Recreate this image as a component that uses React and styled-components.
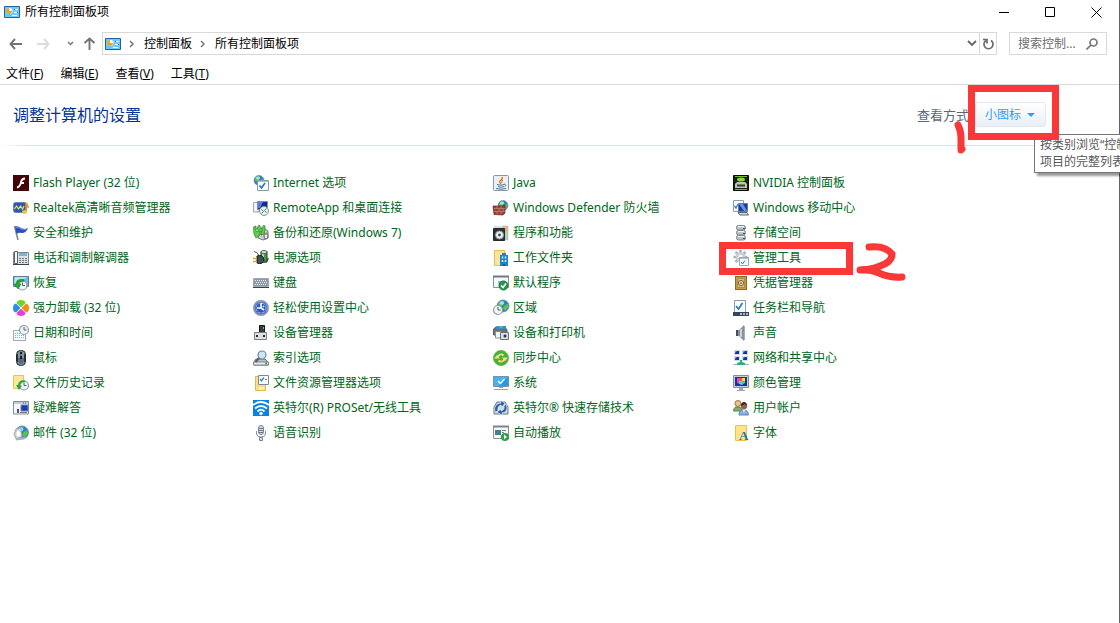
import React, { useState } from "react";
import styled, { createGlobalStyle } from "styled-components";

const GlobalStyle = createGlobalStyle`
    * {
        box-sizing: border-box;
    }

    body {
        margin: 0;
        overflow-x: hidden;
        background: #ffffff;
        color: #000000;
        font: 12px/16px "Noto Sans", "Noto Sans CJK SC", sans-serif;
    }

    button, input, select {
        margin: 0;
        padding: 0;
        border: 0;
        background: none;
        color: inherit;
        font: inherit;
    }

    a {
        color: inherit;
        text-decoration: none;
    }
`;

const Window = styled.div`
    display: flex;
    flex-direction: column;
    min-height: 100vh;
    border-right: 1px solid #626262;
`;

const TitleBar = styled.header`
    display: flex;
    align-items: center;
    height: 24px;
    padding-left: 4px;
`;

const WindowTitle = styled.h1`
    flex: 1;
    margin: 0 0 0 5px;
    font-size: 12px;
    font-weight: normal;
    line-height: 16px;
`;

const WindowButton = styled.button`
    display: flex;
    align-items: center;
    justify-content: center;
    width: 46px;
    height: 24px;
`;

const NavRow = styled.div`
    display: flex;
    align-items: center;
    gap: 12px;
    padding: 8px 12px 0 8px;
`;

const NavButtons = styled.div`
    display: flex;
    align-items: center;
    justify-content: space-between;
    width: 88px;
    margin-right: -6px;
`;

const IconButton = styled.button`
    display: flex;
    align-items: center;
    justify-content: center;
    width: ${(props) => props.$width || 14}px;
    height: 22px;
`;

const AddressBar = styled.nav`
    display: flex;
    flex: 1;
    align-items: center;
    height: 23px;
    padding-left: 2px;
    border: 1px solid #d9d9d9;
`;

const Crumb = styled.a`
    display: flex;
    align-items: center;
`;

const Separator = styled.svg`
    margin: 0 10px 0 8px;
`;

const RefreshBox = styled.div`
    border-left: 1px solid #d9d9d9;
`;

const Spacer = styled.div`
    flex: 1;
`;

const SearchBox = styled.label`
    display: flex;
    align-items: center;
    width: 98px;
    height: 23px;
    padding: 0 8px 0 8px;
    border: 1px solid #d9d9d9;
`;

const SearchInput = styled.input`
    flex: 1;
    min-width: 0;
    outline: none;

    &::placeholder {
        color: #6d6d6d;
        opacity: 1;
    }
`;

const MenuBar = styled.div`
    display: flex;
    gap: 17px;
    padding: 10px 6px 2px;
    border-bottom: 1px solid #d9d9d9;
`;

const MenuItem = styled.button`
    line-height: 17px;
`;

const Heading = styled.section`
    display: flex;
    align-items: center;
    justify-content: space-between;
    height: 61px;
    padding: 0 73px 1px 13px;
    border-bottom: 1px solid;
    border-image: linear-gradient(to right, #ffffff, #d5e3f3 30px) 1;
`;

const HeadingTitle = styled.h2`
    margin: 0;
    color: #003399;
    font-size: 16px;
    font-weight: normal;
    line-height: 24px;
`;

const ViewBy = styled.div`
    position: relative;
    display: flex;
    align-items: center;
    gap: 6px;
`;

const ViewLabel = styled.label`
    color: #5a667c;
    font-size: 13px;
`;

const ViewPicker = styled.span`
    display: flex;
    align-items: center;
    width: 71px;
    height: 25px;
    padding: 0 10px 0 9px;
    border: 1px solid #e2e8f1;
    border-radius: 3px;
    background: linear-gradient(to bottom, #ffffff, #e9eff8);
    color: #3399ff;
`;

const ViewSelect = styled.select`
    flex: 1;
    min-width: 0;
    appearance: none;
    outline: none;
`;

const Tooltip = styled.div`
    position: absolute;
    top: 32px;
    left: 117px;
    height: 39px;
    padding: 1px 5px;
    border: 1px solid #767676;
    background: #ffffff;
    box-shadow: 3px 3px 2px rgba(0, 0, 0, 0.4);
    color: #575757;
    line-height: 17px;
    white-space: nowrap;
`;

const Highlight = styled.span`
    position: absolute;
    top: ${(props) => props.$top}px;
    right: ${(props) => props.$right}px;
    bottom: ${(props) => props.$bottom}px;
    left: ${(props) => props.$left}px;
    border: 7px solid #fb3838;
    pointer-events: none;
`;

const Scribble = styled.svg`
    position: absolute;
    top: ${(props) => props.$top}px;
    left: ${(props) => props.$left}px;
    fill: none;
    stroke: #fb3838;
    stroke-width: 7;
    stroke-linecap: round;
    stroke-linejoin: round;
    pointer-events: none;
`;

const ItemGrid = styled.ul`
    display: grid;
    grid-template-columns: repeat(auto-fill, 240px);
    margin: 0;
    padding: 24px 0 24px 13px;
    list-style: none;
`;

const Item = styled.li`
    position: relative;
    height: 25px;
`;

const ItemLink = styled.a`
    display: inline-flex;
    align-items: center;
    gap: 4px;
    height: 25px;
    color: #00661a;
    white-space: nowrap;

    &:hover {
        text-decoration: underline;
    }
`;

const Icon = ({ children, size = 16 }) => (
    <svg width={size} height={size} viewBox="0 0 16 16" overflow="visible" aria-hidden="true">
        {children}
    </svg>
);

const globe = (x, y, r) => (
    <g transform={`translate(${x} ${y}) scale(${r / 5})`}>
        <circle r="5" fill="#2f7fd6" stroke="#5b88b8" strokeWidth="0.6" />
        <path d="M-4 -2 Q-2 -5 1 -4 L0 -1 L-2 1 L-4 0Z M1 0 L4 -2 L4.500 1 L2 4 L0 2Z" fill="#5cc63c" />
        <ellipse cx="-1" cy="-2.500" rx="2" ry="1.500" fill="#d4f4ff" opacity="0.7" />
    </g>
);

const clock = (x, y, r) => (
    <g>
        <circle cx={x} cy={y} r={r} fill="#edf3f6" stroke="#8e9ba5" strokeWidth="1.200" />
        <path d={`M${x} ${y - r + 1.5} V${y} H${x + r - 2}`} stroke="#51616e" fill="none" />
    </g>
);

const icons = {
    panel: (
        <>
            <path d="M0.500 2.500 H15.500 V13.500 H0.500Z" fill="#70caff" stroke="#1c629c" />
            <circle cx="5.500" cy="7" r="3" fill="#ffffff" />
            <path d="M5 7 V4 A3 3 0 1 0 8 7Z" fill="#f5a21c" />
            <path d="M10 5.500 H14 M10 8.500 H14" stroke="#ffffff" />
            <path d="M10 5.500 H11 M13 8.500 H14" stroke="#1c73bd" />
            <path d="M2 11.500 H7" stroke="#f5a21c" />
            <path d="M8 11.500 H13" stroke="#ffffff" />
        </>
    ),
    flash: (
        <>
            <path d="M0 0 H16 V16 H0Z" fill="#440304" />
            <path d="M12 3.500 Q9 3.500 8 7 Q7 12 4 12.500 M7 8 H11" fill="none" stroke="#ffffff" strokeWidth="1.800" />
        </>
    ),
    realtek: (
        <>
            <rect x="0.500" y="2.500" width="13" height="10" rx="2" fill="#2d56bd" stroke="#6e83b3" />
            <path d="M1.500 9 L3.500 6 L5.500 9 L7.500 6 L9.500 9 L11 6" fill="none" stroke="#f5e44a" strokeWidth="1.200" />
            <path d="M13 12 V3 Q15.500 5 15 8" fill="none" stroke="#e0a121" strokeWidth="1.500" />
            <ellipse cx="11.500" cy="12" rx="2.500" ry="2" fill="#f3c044" />
        </>
    ),
    flag: (
        <>
            <path d="M1.500 1 L5 15" stroke="#7b8793" strokeWidth="1.500" />
            <path d="M2 1.500 Q5 0.500 8 3 Q11 5 15 3 Q13 8 9 8 Q6 7 3.500 9Z" fill="#2b4fc0" />
            <path d="M3 2.500 Q6 2 8 4 L13 4.500" fill="none" stroke="#6f92dd" />
        </>
    ),
    phone: (
        <>
            <path d="M0.500 2.500 H15.500 V14.500 H0.500Z" fill="#dde3e8" stroke="#7c858d" />
            <path d="M0 14.500 H16" stroke="#3c444b" />
            <path d="M1.500 1.500 H4.500 V13.500 H1.500Z" fill="#f7f9fa" stroke="#59636c" />
            <path d="M6 3 H14 V6 H6Z" fill="#7fb2cd" />
            <path d="M6 8.500 H14 M6 10.500 H14 M6 12.500 H14" stroke="#6c7881" strokeDasharray="2 1" />
        </>
    ),
    recovery: (
        <>
            <path d="M0.500 1.500 H15.500 V11.500 H0.500Z" fill="#68bbee" stroke="#62798a" />
            <path d="M2 2 H14 L5 9 H1Z" fill="#b5e2fb" />
            {clock(9.5, 10.5, 4.5)}
            <path d="M11 4.500 Q3 3.500 3 9 H1 L5 14 L8 9 H6 Q6 6.500 11 6Z" fill="#25a536" stroke="#137625" strokeWidth="0.500" />
        </>
    ),
    clover: (
        <>
            <path d="M8 7.500 L3.500 3 Q4 0 8 0 Q12 0 12.500 3Z" fill="#6fd429" />
            <path d="M8.500 8 L13 3.500 Q16 4 16 8 Q16 12 13 12.500Z" fill="#f98b1a" />
            <path d="M8 8.500 L12.500 13 Q12 16 8 16 Q4 16 3.500 13Z" fill="#e23fdc" />
            <path d="M7.500 8 L3 12.500 Q0 12 0 8 Q0 4 3 3.500Z" fill="#238ef5" />
            <path d="M5 5 L11 11 M11 5 L5 11" stroke="#ffffff" />
        </>
    ),
    date: (
        <>
            <path d="M0.500 5.500 H12.500 V15.500 H0.500Z" fill="#f4fafc" stroke="#a0abb4" />
            <path d="M2 8.500 H11 M2 10.500 H11 M2 12.500 H11" stroke="#79bbcf" strokeDasharray="1 1" />
            {clock(11, 5, 4.5)}
        </>
    ),
    mouse: (
        <>
            <rect x="3.500" y="0.500" width="9" height="15" rx="4" fill="#8292a3" stroke="#20262c" />
            <path d="M5 8 Q5 14 8 14 Q11 14 11 8Z" fill="#59687a" />
            <path d="M4.500 4 V12 M11.500 4 V12" stroke="#2b333c" />
            <path d="M8 2 V9" stroke="#15191d" strokeWidth="2" />
            <path d="M8 4 V6" stroke="#b9cbd7" />
        </>
    ),
    history: (
        <>
            <path d="M0.500 0.500 H10.500 V13.500 H0.500Z" fill="#fde79a" stroke="#e8c35a" />
            {clock(11, 10.5, 4.5)}
            <path d="M12 5.500 Q6 4.500 5 10 H3 L6 15 L9 10.500 H7 Q8 7 12 7Z" fill="#28a738" />
        </>
    ),
    trouble: (
        <>
            <path d="M0.500 1.500 H15.500 V14 H0.500Z" fill="#f4f7fa" stroke="#838c98" />
            <path d="M1 3 H15" stroke="#c1cad7" strokeWidth="2" />
            <path d="M10 3 H14" stroke="#416095" strokeDasharray="1 1" />
            <path d="M8 5 H15 V11 H8Z" fill="#163eb8" stroke="#76869f" />
            <path d="M7 12.500 H14" stroke="#667580" />
            <path d="M4 9 H6 V13 H4Z" fill="#4e5966" />
        </>
    ),
    mail: (
        <>
            {globe(9, 7.5, 6.5)}
            <path d="M1 9 L3 4 L8 3 L9 12 L3 14Z" fill="#d3dbe4" stroke="#8995a1" strokeWidth="0.700" />
            <path d="M3 7 L5 4.500 L8 7 V12 H3Z" fill="#ffffff" stroke="#aab3bd" strokeWidth="0.700" />
            <path d="M3 14.500 L12 13" stroke="#a8b3be" strokeWidth="2" />
        </>
    ),
    internet: (
        <>
            {globe(6, 5.5, 5)}
            <path d="M4.500 5.500 H15.500 V15.500 H4.500Z" fill="#f5fafe" stroke="#8b9baf" />
            <path d="M5 6.500 H15" stroke="#b0bfce" />
            <path d="M6.500 10.500 L8.500 13 L12 8" fill="none" stroke="#176fc9" strokeWidth="1.500" />
        </>
    ),
    remote: (
        <>
            <path d="M0.500 2.500 H6 V12 H0.500Z" fill="#f2f4f8" stroke="#9ba5b3" />
            <path d="M4.500 1.500 H14.500 V9.500 H4.500Z" fill="#102a99" stroke="#8291aa" />
            <path d="M5 2 H10 L7 8 H5Z" fill="#5a7bdd" />
            <circle cx="11" cy="11" r="4.500" fill="#e8edf0" stroke="#8c969e" />
            <path d="M8.500 9.500 L10.500 11.500 L8.500 13.500 M13.500 8.500 L11.500 10.500 L13.500 12.500" stroke="#369945" fill="none" />
        </>
    ),
    backup: (
        <>
            <path d="M6 7 L12 4 L15 6 V13 L10 15 L5 13Z" fill="#c9ced1" stroke="#717a81" />
            <ellipse cx="13" cy="11" rx="2" ry="3" fill="#e8edef" stroke="#5c656b" />
            <circle cx="13" cy="9" r="1" fill="#e4743c" />
            <path d="M0.500 2 L3 1 V6 L5 7 V4 L3.500 4 L6 0 L9 4 H7 L7 10 L3 13 L1 9Z M9 3 L10.500 0.500 L12 1 V5 L11 9 L8 10 L8 7 L9 6Z" fill="#5fd04a" stroke="#217c25" strokeWidth="0.700" />
        </>
    ),
    power: (
        <>
            <path d="M8 1.500 H14 V12 H8Z" fill="#35a949" stroke="#26312c" />
            <path d="M10 3 V7" stroke="#b9efc0" strokeWidth="1.500" />
            <ellipse cx="11" cy="2" rx="3" ry="1.500" fill="#e3e9e6" stroke="#56605b" />
            <path d="M1 1.500 Q5 2 6 6" fill="none" stroke="#565e5e" />
            <path d="M4 6 Q10 4 11 10 Q10 15 4 13Z" fill="#444d4f" stroke="#141919" />
            <path d="M0 8.500 H4 M0 11.500 H4" stroke="#d8a529" strokeWidth="1.500" />
            <path d="M10 12 Q15 12 15 8" fill="none" stroke="#454b4c" strokeWidth="1.500" />
        </>
    ),
    keyboard: (
        <>
            <path d="M0.500 3.500 H15.500 V11.500 H0.500Z" fill="#8e99a6" stroke="#a1a9b4" />
            <path d="M2 5.500 H14 M3 7.500 H14 M2 9.500 H14" stroke="#eef1f5" strokeDasharray="1 1" />
            <path d="M0 12.500 H16" stroke="#3a4350" />
        </>
    ),
    ease: (
        <>
            <circle cx="8" cy="8" r="7" fill="#2858c5" stroke="#8b96b0" strokeWidth="2" />
            <circle cx="8" cy="8" r="5" fill="none" stroke="#a2bef7" strokeDasharray="3 1" />
            <path d="M4 8 H8 V4 M8 8 L11 10 M9 3 L8 4 M10 6 L11 7" fill="none" stroke="#ffffff" strokeWidth="1.600" />
        </>
    ),
    device: (
        <>
            <path d="M6.500 0.500 H11.500 V8 H6.500Z" fill="#333b40" stroke="#17191b" />
            <path d="M10.500 2 V4" stroke="#4bdf51" />
            <path d="M1.500 7.500 H13.500 V14.500 H1.500Z" fill="#dce0e2" stroke="#777f84" />
            <path d="M4 10 V12 M11 10 V12" stroke="#22282c" strokeWidth="2" />
        </>
    ),
    index: (
        <>
            <path d="M3 9 H12 L15 12 V15 H1 V12Z" fill="#bac1c6" stroke="#616b72" />
            <path d="M0.500 12 H15.500 V15 H0.500Z" fill="#eceff1" stroke="#79828a" />
            <circle cx="9" cy="5" r="4" fill="#cae6f8" stroke="#7c8790" strokeWidth="1.200" />
            <path d="M6 8 L2.500 12" stroke="#59636b" strokeWidth="2" />
            <path d="M13 12.500 V14.500" stroke="#3da843" strokeWidth="2" />
        </>
    ),
    explorer: (
        <>
            <path d="M2.500 1.500 H12.500 V15.500 H2.500Z" fill="#fddf82" stroke="#e3b945" />
            <path d="M5.500 0.500 H15.500 V9.500 H5.500Z" fill="#ffffff" stroke="#7e8792" />
            <path d="M7 4 L8.500 6 L11 2.500" fill="none" stroke="#2d83dc" strokeWidth="1.300" />
            <path d="M12 4.500 H14" stroke="#6f7a84" />
            <path d="M6 12 H11 V15 H6Z" fill="#fff2be" />
        </>
    ),
    wifi: (
        <>
            <path d="M0 0 H16 V16 H0Z" fill="#0982e7" />
            <path d="M0 5 Q8 -1 16 5 M2 8.500 Q8 3.500 14 8.500 M4.500 11.500 Q8 8 11.500 11.500" fill="none" stroke="#ffffff" strokeWidth="1.800" />
            <circle cx="8" cy="13.500" r="1.700" fill="#ffffff" />
        </>
    ),
    mic: (
        <>
            <rect x="5.500" y="0.500" width="5" height="9" rx="2.500" fill="#d6dce3" stroke="#7c8696" />
            <path d="M6 3.500 H10 M6 5.500 H10 M6 7.500 H10" stroke="#69778b" />
            <path d="M3.500 6 V9 Q4 12 8 12 Q12 12 12.500 9 V6 M8 12 V15" fill="none" stroke="#8992a0" />
            <path d="M6.500 12.500 H9.500 V15.500 H6.500Z" fill="#dbe0e6" stroke="#778395" />
        </>
    ),
    java: (
        <>
            <rect x="0.500" y="0.500" width="15" height="15" rx="1" fill="#eaf0f5" stroke="#8a98a8" />
            <path d="M9 2 Q10 4 7 6 Q6 7 8 9" fill="none" stroke="#e7791d" strokeWidth="1.400" />
            <path d="M10 5 Q8 6 9 8" fill="none" stroke="#e7791d" />
            <path d="M4 9.500 Q8 11 11 9.500 M5 11.500 Q8 13 11 11.500 M3 13.500 Q8 15 13 13.500" fill="none" stroke="#467398" />
            <path d="M11 9 Q14.500 10 11.500 11.500" fill="none" stroke="#467398" />
        </>
    ),
    firewall: (
        <>
            {globe(10, 5.5, 5)}
            <path d="M0 6 L10 6 L12 5 V13 L10 15 L1 14.500Z" fill="#9c4133" stroke="#5e241b" strokeWidth="0.700" />
            <path d="M1 8.500 H12 M1 11.500 H12 M4 6 V8 M8 6 V8 M6 9 V11 M10 9 V11 M4 12 V14 M8 12 V14" stroke="#d9a898" strokeWidth="0.500" />
        </>
    ),
    programs: (
        <>
            <path d="M1 1 H14 V5 H1Z" fill="#d9dee1" />
            <path d="M10 1 H15 V15 H10Z" fill="#b3ccb9" stroke="#abb4ba" strokeWidth="0.500" />
            <path d="M12 1 H15 V5 L12 8Z" fill="#e9ae7d" />
            <path d="M0.500 3.500 H11.500 V15.500 H0.500Z" fill="#2b3237" stroke="#24292d" />
            <circle cx="6.500" cy="10" r="4" fill="#edf0f1" stroke="#929ba1" />
            <circle cx="6.500" cy="10" r="1.400" fill="#3e484f" />
        </>
    ),
    workFolder: (
        <>
            <path d="M1.500 0.500 H11.500 V15.500 H1.500Z" fill="#fde69c" stroke="#e5bd55" />
            <path d="M7 5 H15 V16 H7Z M9 3 H13 V5 H9Z" fill="#1d83cf" />
            <path d="M9.500 6.500 V8.500 M12.500 6.500 V8.500 M9.500 10 V12 M12.500 10 V12" stroke="#d0ecfd" strokeWidth="1.600" />
            <path d="M11 14 V16" stroke="#0d5b99" strokeWidth="2" />
        </>
    ),
    defaults: (
        <>
            <path d="M0.500 1.500 H15.500 V12.500 H0.500Z" fill="#f6f8fb" stroke="#89939e" />
            <path d="M0 1.500 H16" stroke="#6d7884" strokeWidth="2" />
            <path d="M5 6 H10 L6 11Z" fill="#7fb7e6" />
            <circle cx="10.500" cy="10.500" r="4.500" fill="#249b46" stroke="#127634" />
            <path d="M8 10.500 L10 12.500 L13 8.500" fill="none" stroke="#ffffff" strokeWidth="1.600" />
        </>
    ),
    region: <>{globe(10, 6, 6)}{clock(5, 10, 4.5)}</>,
    printer: (
        <>
            <path d="M0.500 4 L3 2 H12 L14 5 V10 H0.500Z" fill="#6a7279" stroke="#555f67" />
            <path d="M4 1 H13 V4 H3Z" fill="#328dd5" />
            <path d="M6 1 H10 L9 3 H7Z" fill="#66c452" />
            <path d="M2.500 6.500 H8 V13 H2.500Z" fill="#f4f6f8" stroke="#87919a" />
            <path d="M7.500 7.500 H15.500 V14.500 H7.500Z" fill="#d8dee2" stroke="#68727a" />
            <circle cx="12" cy="11" r="2" fill="#29333a" stroke="#ffffff" strokeWidth="0.700" />
        </>
    ),
    sync: (
        <>
            <circle cx="8" cy="8" r="7.500" fill="#4aae3c" stroke="#5fbb43" />
            <path d="M4.500 8 A3.500 3.500 0 0 1 10.500 5.500 M11.500 8 A3.500 3.500 0 0 1 5.500 10.500" fill="none" stroke="#f2e27c" strokeWidth="1.800" />
            <path d="M9 7.500 H15 L12 11Z M1 8.500 H7 L4 5Z" fill="#f2e27c" />
        </>
    ),
    system: (
        <>
            <path d="M0.500 1.500 H15.500 V11.500 H0.500Z" fill="#249be9" stroke="#7891a3" />
            <path d="M1 2 H15 L5 11 H1Z" fill="#47b2f2" />
            <path d="M5 6 L7.500 8.500 L11.500 4" fill="none" stroke="#ffffff" strokeWidth="1.400" />
            <path d="M6 12.500 H10 M1 14.500 H15" stroke="#91a5b4" />
        </>
    ),
    storageTech: (
        <>
            <path d="M1 7 L4 2 H12 L15 7 V14 H1Z" fill="#d0d8df" stroke="#69747f" />
            <path d="M2 12 Q0 4 8 3 L7 0.500 L12 3 L9 7 L8 5 Q4 6 5 11Z M13 4 Q16 12 9 13 L9 15 L4 12 L8 9 V11 Q12 10 11 6Z" fill="#265faf" stroke="#ffffff" strokeWidth="0.500" />
        </>
    ),
    autoplay: (
        <>
            <path d="M0.500 1.500 H15.500 V13.500 H0.500Z" fill="#f5f7f8" stroke="#87939a" />
            <path d="M0 1.500 H16" stroke="#7b858c" strokeWidth="2" />
            <path d="M2 5 H8 V10 H2Z" fill="#417f8f" />
            <path d="M9 5.500 H13 M9 7.500 H11" stroke="#75848d" />
            <circle cx="12" cy="12" r="4" fill="#29a344" />
            <path d="M11 9.500 L14 12 L11 14.500Z" fill="#ffffff" />
        </>
    ),
    nvidia: (
        <>
            <path d="M0.500 0.500 H15.500 V15.500 H0.500Z" fill="#15220e" stroke="#050a03" />
            <path d="M2 1.500 H14 M2 14.500 H14" stroke="#6fc026" />
            <ellipse cx="8" cy="4.500" rx="4" ry="2" fill="#8ad63c" />
            <path d="M2 9 L4 7 H12 L14 9 V13 H2Z" fill="#bac4b7" />
            <path d="M4 10.500 H12" stroke="#314030" strokeWidth="2" />
        </>
    ),
    mobility: (
        <>
            <path d="M0.500 0.500 H10.500 V11.500 H0.500Z" fill="#f5f9fc" stroke="#90a0b0" />
            <path d="M1.500 6 L3 8 L5 4" fill="none" stroke="#3683cb" strokeWidth="1.300" />
            <path d="M5.500 3.500 H14.500 V11.500 H5.500Z" fill="#143cb2" stroke="#6d7a8b" />
            <path d="M6 4 H10 L14 11 H11Z" fill="#6d92e3" />
            <path d="M5 12.500 H14 L15.500 15 H7Z" fill="#d6dde2" stroke="#566572" />
        </>
    ),
    storage: (
        <>
            {[0, 5, 10].map((y) => (
                <g key={y}>
                    <rect x="3.500" y={y + 0.5} width="9" height="4.500" rx="2" fill="#bdc4c8" stroke="#7c858b" />
                    <path d={`M5 ${y + 1.5} H11`} stroke="#f4f7f8" />
                    <path d={`M10 ${y + 3.5} H12`} stroke="#4b5961" />
                </g>
            ))}
        </>
    ),
    admin: (
        <>
            <g stroke="#a9b2b8" strokeWidth="2.500">
                <path d="M7.500 0 V14 M0.500 7 H14.500 M2.500 2 L12.500 12 M12.500 2 L2.500 12" />
            </g>
            <circle cx="7.500" cy="7" r="4.800" fill="#c9d0d5" />
            <circle cx="7.500" cy="7" r="2.200" fill="#ffffff" />
            <path d="M6.500 7.500 H15.500 V15.500 H6.500Z" fill="#f7fafc" stroke="#9ba7b2" />
            <path d="M8 12 L9.500 14 L12 10.500" fill="none" stroke="#2583c7" />
            <path d="M7 8.500 H15" stroke="#b4c0cb" />
        </>
    ),
    credentials: (
        <>
            <rect x="2.500" y="1.500" width="11" height="13" fill="#c99a3e" stroke="#8d6a2b" />
            <rect x="4.500" y="3.500" width="7" height="9" fill="#dfba68" stroke="#b38b3e" />
            <circle cx="8" cy="8" r="2.600" fill="#e6e2cf" stroke="#776342" />
            <circle cx="8" cy="8" r="1" fill="#786f5e" />
        </>
    ),
    taskbar: (
        <>
            <path d="M1.500 0.500 H12.500 V13.500 H1.500Z" fill="#fcfdfe" stroke="#8f9da9" />
            <path d="M3 6 L5.500 9 L9.500 3" fill="none" stroke="#277bd1" strokeWidth="1.700" />
            <path d="M0 12 H16 V16 H0Z" fill="#36475c" />
            <path d="M7 14 H15" stroke="#a9bbca" strokeWidth="2" strokeDasharray="2 1" />
        </>
    ),
    sound: (
        <>
            <path d="M3 5 H6 L11 0 V16 L6 11 H3Z" fill="#89939c" />
            <path d="M3 5 H5 V11 H3Z" fill="#464f57" />
            <path d="M8 4 V12" stroke="#cbd2d7" strokeWidth="2" />
            <path d="M11.500 1 V15" stroke="#a6afb6" />
        </>
    ),
    network: (
        <>
            {[[1, 0], [9, 0], [1, 6], [9, 6]].map(([x, y]) => (
                <g key={`${x}-${y}`}>
                    <path d={`M${x} ${y} H${x + 6} V${y + 5} H${x}Z`} fill="#d2dae5" />
                    <path d={`M${x + 1} ${y + 1} H${x + 5} V${y + 4} H${x + 1}Z`} fill="#1434a8" />
                    <path d={`M${x + 1} ${y + 1} H${x + 3} L${x + 1} ${y + 3}Z`} fill="#7f9df0" />
                </g>
            ))}
            <path d="M7 10 H9 V12 L12 13 V15 H4 V13 L7 12Z" fill="#22b573" />
            <path d="M0 14.500 H4 M12 14.500 H16" stroke="#a7b5bc" />
        </>
    ),
    color: (
        <>
            <path d="M0.500 0.500 H15.500 V12.500 H0.500Z" fill="#c9d1d8" stroke="#838e98" />
            <path d="M2 2 H14 V11 H2Z" fill="#182caf" />
            <path d="M4 3 H7 V9 L4 8Z" fill="#e047d0" />
            <path d="M6 3 H9 V6 H6Z" fill="#ff5050" />
            <path d="M9 3 H12 V6 H9Z" fill="#ffe25b" />
            <path d="M9 6 H12 V8 L9 10Z" fill="#49d454" />
            <path d="M6 6 H9 V10 L6 9Z" fill="#43d8ef" />
            <path d="M6 14 H10" stroke="#9aa5ae" strokeWidth="2" />
            <path d="M4 15.500 H12" stroke="#9aa5ae" />
        </>
    ),
    users: (
        <>
            <circle cx="5" cy="3.500" r="3" fill="#edc487" stroke="#9a7540" />
            <path d="M0.500 11 Q1 6 5 7 Q9 7 9 11Z" fill="#87ad64" stroke="#60854d" />
            <circle cx="11" cy="6" r="3.200" fill="#966346" />
            <path d="M8 6 Q8 1.500 12 2 Q14 3 14 6 L12 4Z" fill="#342a27" />
            <path d="M6 15 Q6 9 11 10 Q15 10 15.500 15Z" fill="#83aee0" stroke="#6687b0" />
            <path d="M10 10 L11 13 L12 10" fill="#ffffff" />
        </>
    ),
    fonts: (
        <>
            <path d="M2.500 0.500 H13.500 V15.500 H2.500Z" fill="#fee488" stroke="#eec14b" />
            <text x="6" y="15" fill="#1374b4" fontFamily="Liberation Serif, serif" fontSize="13" fontWeight="bold">A</text>
        </>
    ),
};

const controlPanelItems = [
    ["flash", "Flash Player (32 位)"],
    ["internet", "Internet 选项"],
    ["java", "Java"],
    ["nvidia", "NVIDIA 控制面板"],
    ["realtek", "Realtek高清晰音频管理器"],
    ["remote", "RemoteApp 和桌面连接"],
    ["firewall", "Windows Defender 防火墙"],
    ["mobility", "Windows 移动中心"],
    ["flag", "安全和维护"],
    ["backup", "备份和还原(Windows 7)"],
    ["programs", "程序和功能"],
    ["storage", "存储空间"],
    ["phone", "电话和调制解调器"],
    ["power", "电源选项"],
    ["workFolder", "工作文件夹"],
    ["admin", "管理工具"],
    ["recovery", "恢复"],
    ["keyboard", "键盘"],
    ["defaults", "默认程序"],
    ["credentials", "凭据管理器"],
    ["clover", "强力卸载 (32 位)"],
    ["ease", "轻松使用设置中心"],
    ["region", "区域"],
    ["taskbar", "任务栏和导航"],
    ["date", "日期和时间"],
    ["device", "设备管理器"],
    ["printer", "设备和打印机"],
    ["sound", "声音"],
    ["mouse", "鼠标"],
    ["index", "索引选项"],
    ["sync", "同步中心"],
    ["network", "网络和共享中心"],
    ["history", "文件历史记录"],
    ["explorer", "文件资源管理器选项"],
    ["system", "系统"],
    ["color", "颜色管理"],
    ["trouble", "疑难解答"],
    ["wifi", "英特尔(R) PROSet/无线工具"],
    ["storageTech", "英特尔® 快速存储技术"],
    ["users", "用户帐户"],
    ["mail", "邮件 (32 位)"],
    ["mic", "语音识别"],
    ["autoplay", "自动播放"],
    ["fonts", "字体"],
];

const menus = [
    ["文件", "F"],
    ["编辑", "E"],
    ["查看", "V"],
    ["工具", "T"],
];

const Chevron = () => (
    <Separator width="5" height="8" fill="none" stroke="#777777" strokeWidth="1.500">
        <path d="M1 1 L4 4 L1 7" />
    </Separator>
);

function App() {
    const [view, setView] = useState("small");
    const [search, setSearch] = useState("");

    return (
        <>
            <GlobalStyle />
            <Window>
                <TitleBar>
                    <Icon>{icons.panel}</Icon>
                    <WindowTitle>所有控制面板项</WindowTitle>
                    <WindowButton aria-label="最小化">
                        <svg width="11" height="11" stroke="#000000"><path d="M0 5.500 H10" /></svg>
                    </WindowButton>
                    <WindowButton aria-label="最大化">
                        <svg width="11" height="11" fill="none" stroke="#000000"><path d="M0.500 0.500 H9.500 V9.500 H0.500Z" /></svg>
                    </WindowButton>
                    <WindowButton aria-label="关闭">
                        <svg width="11" height="11" stroke="#000000"><path d="M0.500 0.500 L10.500 10.500 M10.500 0.500 L0.500 10.500" /></svg>
                    </WindowButton>
                </TitleBar>

                <NavRow>
                    <NavButtons>
                        <IconButton aria-label="后退">
                            <svg width="13" height="12" fill="none" stroke="#737373" strokeWidth="1.900"><path d="M6 1 L1.500 6 L6 11 M1.500 6 H13" /></svg>
                        </IconButton>
                        <IconButton aria-label="前进" $width={30}>
                            <svg width="13" height="12" fill="none" stroke="#dcdcdc" strokeWidth="1.900"><path d="M7 1 L11.500 6 L7 11 M11.500 6 H0" /></svg>
                        </IconButton>
                        <IconButton aria-label="最近浏览的位置" $width={12}>
                            <svg width="7" height="5" fill="none" stroke="#777777" strokeWidth="1.500"><path d="M1 1 L3.500 3.500 L6 1" /></svg>
                        </IconButton>
                        <IconButton aria-label="上移">
                            <svg width="13" height="13" fill="none" stroke="#737373" strokeWidth="1.900"><path d="M1.500 6 L6.500 1.500 L11.500 6 M6.500 1.500 V13" /></svg>
                        </IconButton>
                    </NavButtons>
                    <AddressBar aria-label="地址">
                        <Icon>{icons.panel}</Icon>
                        <Chevron />
                        <Crumb href="#panel">控制面板</Crumb>
                        <Chevron />
                        <Crumb href="#all">所有控制面板项</Crumb>
                        <Spacer />
                        <IconButton aria-label="以前的位置">
                            <svg width="10" height="7" fill="none" stroke="#666666" strokeWidth="1.900"><path d="M1 1 L5 5 L9 1" /></svg>
                        </IconButton>
                        <RefreshBox>
                            <IconButton aria-label="刷新" $width={16}>
                                <svg width="11" height="12" fill="none" stroke="#6a6a6a" strokeWidth="1.700">
                                    <path d="M3 2.500 A4.500 4.500 0 1 0 8 2.500" />
                                    <path d="M4 5.500 V1.500 H0" />
                                </svg>
                            </IconButton>
                        </RefreshBox>
                    </AddressBar>
                    <SearchBox>
                        <SearchInput
                            aria-label="搜索控制面板"
                            placeholder="搜索控制..."
                            value={search}
                            onChange={(e) => setSearch(e.target.value)}
                        />
                        <svg width="12" height="12" fill="none" stroke="#777777" strokeWidth="1.700">
                            <circle cx="7.500" cy="4.500" r="3.500" />
                            <path d="M5 7 L0.500 11.500" />
                        </svg>
                    </SearchBox>
                </NavRow>

                <MenuBar>
                    {menus.map(([label, key]) => (
                        <MenuItem key={key}>{label}(<u>{key}</u>)</MenuItem>
                    ))}
                </MenuBar>

                <main>
                    <Heading>
                        <HeadingTitle>调整计算机的设置</HeadingTitle>
                        <ViewBy>
                            <ViewLabel htmlFor="view">查看方式</ViewLabel>
                            <ViewPicker>
                                <ViewSelect id="view" value={view} onChange={(e) => setView(e.target.value)}>
                                    <option value="category">类别</option>
                                    <option value="large">大图标</option>
                                    <option value="small">小图标</option>
                                </ViewSelect>
                                <svg width="8" height="4" fill="#3399ff"><path d="M0 0 H8 L4 4Z" /></svg>
                            </ViewPicker>
                            <Tooltip role="tooltip">
                                按类别浏览“控制面板”
                                <br />
                                项目的完整列表
                            </Tooltip>
                            <Highlight $top={-17} $right={-13} $bottom={-13} $left={51} />
                            <Scribble width="16" height="38" $top={16} $left={36}>
                                <path d="M5 7 Q8 13 8 20 Q8 27 8 32 L9 31" />
                            </Scribble>
                        </ViewBy>
                    </Heading>

                    <ItemGrid>
                        {controlPanelItems.map(([icon, label]) => (
                            <Item key={icon}>
                                <ItemLink href={`#${icon}`}>
                                    <Icon>{icons[icon]}</Icon>
                                    {label}
                                </ItemLink>
                                {icon === "admin" && (
                                    <>
                                        <Highlight $top={-3} $right={120} $bottom={-5} $left={-14} />
                                        <Scribble width="56" height="44" $top={-5} $left={119}>
                                            <path d="M17 7 Q33 5 40 14 Q40 22 28 26 Q18 30 8 30 Q18 29 27 33 Q38 38 50 37" />
                                        </Scribble>
                                    </>
                                )}
                            </Item>
                        ))}
                    </ItemGrid>
                </main>
            </Window>
        </>
    );
}

export default App;
